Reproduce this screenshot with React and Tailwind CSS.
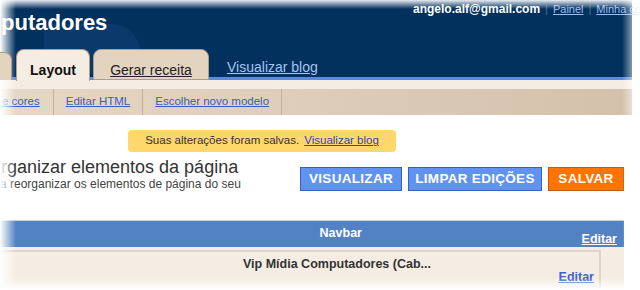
export default function App() {
  const sans = { fontFamily: '"Liberation Sans", Arial, sans-serif' };

  return (
    <div className="relative w-[640px] h-[290px] overflow-hidden bg-white" style={sans}>
      {/* cabeçalho */}
      <div className="w-[632px]">
        <div className="relative h-[77px] bg-[#02315e] flex flex-col">
          <div className="absolute left-[44px] top-[24px] w-[96px] h-[50px] rounded-tr-[28px] bg-[#0a3a6c]" />
          <div className="relative h-[49px] flex">
            <div className="shrink-0 w-[413px] pl-[1px] pt-[12px] text-[22px] font-bold text-white leading-none">putadores</div>
            <div className="shrink-0 flex items-start pt-[2px] text-[12px] leading-[14px] whitespace-nowrap">
              <span className="font-bold text-white">angelo.alf@gmail.com</span>
              <span className="mx-[5px] text-[11px] text-[#56708f]">|</span>
              <a className="text-[11px] text-[#9dbdf0] underline">Painel</a>
              <span className="mx-[5px] text-[11px] text-[#56708f]">|</span>
              <a className="text-[11px] text-[#9dbdf0] underline">Minha conta</a>
            </div>
          </div>
          <div className="relative h-[28px] flex items-end">
            <div className="relative z-10 -mb-[3px] w-[12px] h-[28px] rounded-tr-[8px] bg-[#e3d4c0] border border-l-0 border-b-0 border-[#b39c84]" />
            <div className="relative z-10 -mb-[4px] ml-[4px] w-[74px] h-[32px] rounded-t-[8px] bg-[#f5ede3] border border-b-0 border-[#b39c84] flex items-start justify-center pt-[12px] text-[14px] leading-[16px] font-bold text-[#111]">
              Layout
            </div>
            <div className="relative z-10 -mb-[3px] ml-[3px] w-[116px] h-[31px] rounded-t-[8px] bg-[#e3d4c0] border border-[#b39c84] flex items-start justify-center pt-[12px] text-[14px] leading-[16px] text-[#222]">
              <span className="underline">Gerar receita</span>
            </div>
            <a className="ml-[18px] pb-[1px] text-[14px] leading-[18px] text-[#a7c4f3] underline">Visualizar blog</a>
          </div>
        </div>
        <div className="h-[3px] bg-[#5b8be0]" />
        <div className="h-[9px] bg-[#f5ede3]" />

        {/* sub menu */}
        <div className="h-[26px] flex bg-gradient-to-r from-[#e6d8c6] to-[#d3c1ab] text-[11.5px] text-[#3a5cc4]">
          <div className="pl-[2px] pr-[13px] flex items-center border-r border-[#c6b199]"><span className="underline">e cores</span></div>
          <div className="px-[12px] flex items-center border-r border-[#c6b199]"><span className="underline">Editar HTML</span></div>
          <div className="px-[12px] flex items-center border-r border-[#c6b199]"><span className="underline">Escolher novo modelo</span></div>
        </div>
      </div>

      <div className="w-[624px]">
        {/* aviso */}
        <div className="mt-[15px] ml-[128px] w-[268px] h-[22px] rounded-[4px] bg-[#ffd76a] flex items-center justify-center gap-[5px] text-[11.5px] text-[#333]">
          <span>Suas alterações foram salvas.</span>
          <a className="text-[#3344aa] underline">Visualizar blog</a>
        </div>

        {/* título e botões */}
        <div className="h-[68px] flex items-start justify-between">
          <div className="pt-[5px] whitespace-nowrap">
            <div className="-ml-[9px] text-[18px] leading-[20px] text-[#333]">organizar elementos da página</div>
            <div className="-ml-[4px] text-[12px] leading-[14px] text-[#444]">ra reorganizar os elementos de página do seu</div>
          </div>
          <div className="pt-[15px] flex gap-[6px] text-[13.5px] font-bold text-white tracking-[0.3px]">
            <div className="w-[102px] h-[24px] flex items-center justify-center bg-[#5f93ef] border border-[#3563c2]">VISUALIZAR</div>
            <div className="w-[134px] h-[24px] flex items-center justify-center bg-[#5f93ef] border border-[#3563c2]">LIMPAR EDIÇÕES</div>
            <div className="w-[76px] h-[24px] flex items-center justify-center bg-[#ff7300] border border-[#c25a18]">SALVAR</div>
          </div>
        </div>

        {/* navbar */}
        <div className="border-t border-[#c9ced6] h-[27px] bg-[#5282c4] flex text-white font-bold text-[12.5px]">
          <div className="flex-1 pl-[100px] pt-[3px] text-center">Navbar</div>
          <a className="self-end pr-[7px] leading-[15px] underline">Editar</a>
        </div>
        <div className="bg-[#f5ede3] pt-[3px] h-[60px]">
          <div className="w-[601px] h-[50px] border-t-2 border-r-2 border-[#ddd5ca] flex flex-col">
            <div className="pl-[75px] pt-[5px] text-center text-[12.5px] leading-[15px] font-bold text-[#333]">Vip Mídia Computadores (Cab...</div>
            <a className="self-end mr-[5px] -mt-[2px] text-[12.5px] leading-[15px] font-bold text-[#3e63cf] underline">Editar</a>
          </div>
        </div>
      </div>

      {/* bordas esmaecidas */}
      <div className="pointer-events-none absolute inset-y-0 left-0 w-[16px] bg-gradient-to-r from-white to-transparent" />
      <div className="pointer-events-none absolute inset-x-0 top-0 h-[9px] bg-gradient-to-b from-white/90 to-transparent" />
      <div className="pointer-events-none absolute inset-y-0 left-[622px] right-0 bg-gradient-to-r from-transparent to-white/90" />
      <div className="pointer-events-none absolute inset-x-0 bottom-0 h-[12px] bg-gradient-to-b from-transparent to-white" />
    </div>
  );
}
